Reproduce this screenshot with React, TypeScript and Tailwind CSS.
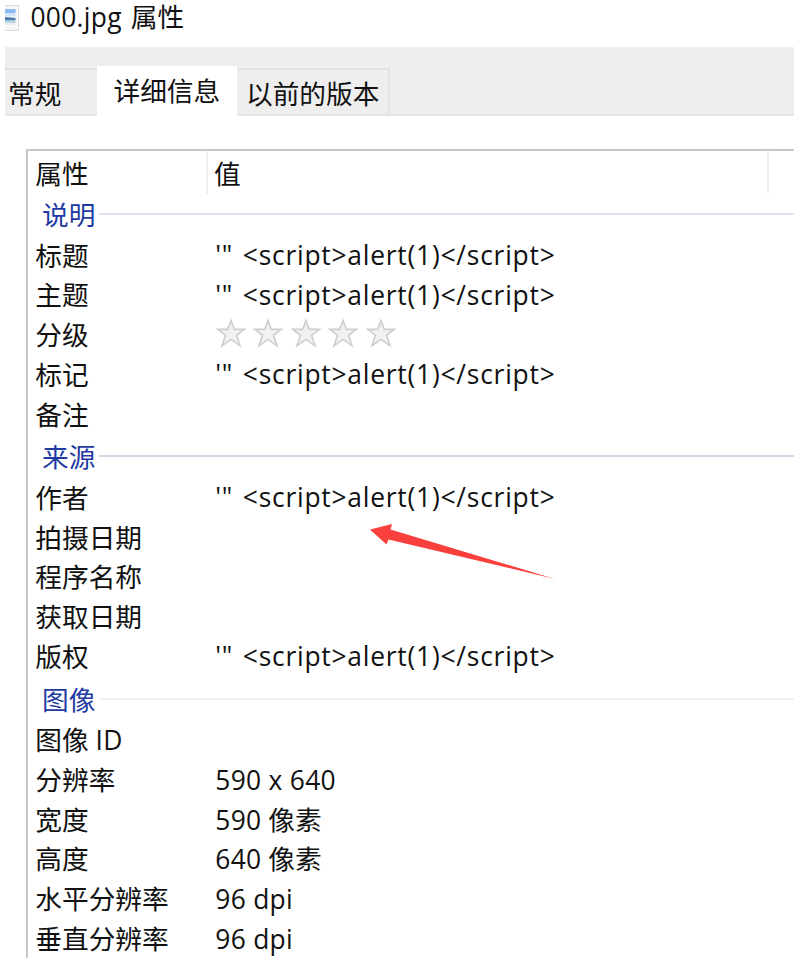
import type { ReactNode } from 'react';

const SCRIPT = '<script>alert(1)</script>';

const Latin = ({ children }: { children: ReactNode }) => (
  <span className="text-[26.4px] tracking-[0.28px]">{children}</span>
);

const Payload = () => (
  <span className="-mt-[1px] flex text-[26.4px]">
    <span className="w-[27.5px] tracking-[0.6px]">{'\'"'}</span>
    <span className="tracking-[0.77px]">{SCRIPT}</span>
  </span>
);

const Stars = () => (
  <span className="-mt-[4px] ml-[0.5px] flex gap-[7.5px]">
    {[0, 1, 2, 3, 4].map((i) => (
      <svg key={i} width="30" height="30" viewBox="0 0 30 30">
        <path
          d="M15 2.5L18.3 11.4H28.3L20.6 17.3L24 27.8L15 21.4L6 27.8L9.4 17.3L1.7 11.4H11.7Z"
          fill="#f1f1f1"
          stroke="#cecece"
          strokeWidth="1.6"
        />
      </svg>
    ))}
  </span>
);

const Row = ({ label, children }: { label: ReactNode; children?: ReactNode }) => (
  <div className="flex h-[39.75px] items-center pl-[7.3px]">
    <span className="w-[180px]">{label}</span>
    {children}
  </div>
);

const Group = ({ title, line, size }: { title: string; line: string; size: string }) => (
  <div className={`flex items-center pl-[14px] text-[#1f3ba2] ${size}`}>
    <span>{title}</span>
    <span className={`-mt-[3px] ml-[4px] h-[2px] grow ${line}`} />
  </div>
);

export default function App() {
  return (
    <div className="h-[958px] w-[794px] overflow-hidden bg-white font-['Open_Sans','Noto_Sans_CJK_SC',sans-serif] text-[26.7px] leading-none whitespace-pre text-[#111]">
      <header className="flex h-[47px] items-start pl-[5px]">
        <svg className="mt-[5px]" width="15" height="26" viewBox="0 0 15 26">
          <path d="M0 .5H13.5V25.5H0" fill="#f6f6f6" stroke="#dcdcdc" />
          <path d="M0 4H10.5V20H0Z" fill="#e8f1f8" />
          <path d="M0 4H10.5V8H0Z" fill="#8eb9ee" />
          <path d="M0 8H10.5V11H0Z" fill="#d3e4f7" />
          <path d="M0 12L10.5 13V15.5H0Z" fill="#4a7ba6" />
          <path d="M0 15.5H10.5V18H0Z" fill="#b9d4e6" />
        </svg>
        <span className="ml-[10.5px] leading-[33px]"><Latin>000.jpg</Latin><span className="ml-[2px]"> 属性</span></span>
      </header>
      <nav className="ml-[5px] flex h-[69px] items-end border-b-2 border-[#e5e5e5] bg-[#eeeeee]">
        <div className="flex h-[46px] w-[92px] items-center border-t-2 border-[#e2e2e2] pt-[4px] pl-[3px]">常规</div>
        <div className="-mb-[2px] flex h-[50px] w-[140px] items-center bg-white pl-[16.5px]">详细信息</div>
        <div className="flex h-[46px] w-[153px] items-center border-t-2 border-r-2 border-[#e2e2e2] pt-[4px] pl-[9px]">以前的版本</div>
      </nav>
      <main className="mt-[33px] ml-[26px] h-[809px] border-t-2 border-l-2 border-[#c8c8c8]">
        <div className="flex h-[44px] items-start">
          <div className="flex h-[43px] w-[180px] items-center border-r-2 border-[#f0f0f0] pt-[3px] pl-[7.3px]">属性</div>
          <div className="flex h-[43px] w-[561px] items-center border-r-2 border-[#f0f0f0] pt-[3px] pl-[6px]">值</div>
        </div>
        <Group title="说明" line="bg-[#dfe3f1]" size="h-[41px]" />
        <Row label="标题"><Payload /></Row>
        <Row label="主题"><Payload /></Row>
        <Row label="分级"><Stars /></Row>
        <Row label="标记"><Payload /></Row>
        <Row label="备注" />
        <Group title="来源" line="bg-[#cfd9e8]" size="h-[43.5px] pt-[1.5px]" />
        <div className="relative">
          <Row label="作者"><Payload /></Row>
          <svg className="absolute top-[44px] left-[340px]" width="190" height="60" viewBox="368 522 190 60">
            <path d="M370 529.5L392 524L390.5 529.5L555 579L388.5 539.5L386.5 544.5Z" fill="#f9403c" />
          </svg>
          <Row label="拍摄日期" />
          <Row label="程序名称" />
          <Row label="获取日期" />
          <Row label="版权"><Payload /></Row>
        </div>
        <Group title="图像" line="bg-[#f1f1f1]" size="h-[43.5px] pt-[3px]" />
        <Row label={<>图像 <Latin>ID</Latin></>} />
        <Row label="分辨率"><Latin>590 x 640</Latin></Row>
        <Row label="宽度"><span><Latin>590</Latin> 像素</span></Row>
        <Row label="高度"><span><Latin>640</Latin> 像素</span></Row>
        <Row label="水平分辨率"><Latin>96 dpi</Latin></Row>
        <Row label="垂直分辨率"><Latin>96 dpi</Latin></Row>
      </main>
    </div>
  );
}
